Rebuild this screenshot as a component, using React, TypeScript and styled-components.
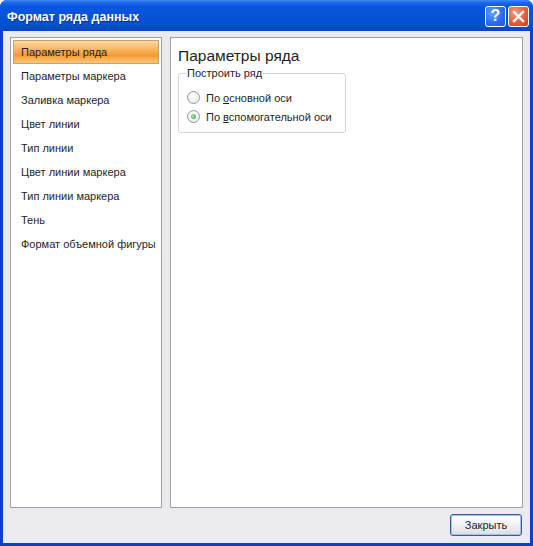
import React from "react";
import styled, { createGlobalStyle } from "styled-components";

const Global = createGlobalStyle`
  html, body { margin: 0; padding: 0; background: #ffffff; }
  body { font-family: "Liberation Sans", Arial, sans-serif; }
`;

const Window = styled.div`
  width: 533px;
  height: 546px;
  box-sizing: border-box;
  display: flex;
  flex-direction: column;
  background: #0842c8;
  border-radius: 7px 7px 0 0;
  overflow: hidden;
`;

const TitleBar = styled.div`
  height: 31px;
  flex: none;
  display: flex;
  align-items: center;
  padding: 0 4px 0 7px;
  box-sizing: border-box;
  background: linear-gradient(
    to bottom,
    #3d8cf5 0%,
    #1f6ae8 8%,
    #0a58e0 20%,
    #0653d8 50%,
    #0550d0 80%,
    #0745c0 100%
  );
`;

const Title = styled.div`
  flex: 1;
  color: #ffffff;
  font-family: "Liberation Sans", Arial, sans-serif;
  font-weight: bold;
  font-size: 12.5px;
  text-shadow: 1px 1px 0 #0a2c80;
  padding-top: 2px;
  white-space: nowrap;
`;

const TitleButtons = styled.div`
  display: flex;
  gap: 2px;
  padding-top: 1px;
`;

const CapButton = styled.div<{ $kind: "help" | "close" }>`
  width: 21px;
  height: 21px;
  box-sizing: border-box;
  border: 1px solid #ffffff;
  border-radius: 3px;
  display: flex;
  align-items: center;
  justify-content: center;
  color: #fff;
  font-family: "Liberation Sans", sans-serif;
  font-weight: bold;
  font-size: 16px;
  background: ${(p) =>
    p.$kind === "help"
      ? "radial-gradient(circle at 35% 30%, #6aa0ff 0%, #2c6cf0 55%, #1a55d8 100%)"
      : "radial-gradient(circle at 35% 30%, #f09a80 0%, #e0603c 55%, #c8401e 100%)"};
`;

const Body = styled.div`
  flex: 1;
  margin: 0 3px 3px 3px;
  background: #ebeaee;
  display: flex;
  flex-direction: column;
  padding: 6px 7px 0 7px;
  box-sizing: border-box;
`;

const Panels = styled.div`
  display: flex;
  gap: 8px;
  height: 471px;
`;

const NavPanel = styled.div`
  width: 152px;
  box-sizing: border-box;
  background: #ffffff;
  border: 1px solid #a0a0a0;
  padding: 2px 2px;
  display: flex;
  flex-direction: column;
`;

const NavItem = styled.div<{ $active?: boolean }>`
  height: 24px;
  flex: none;
  box-sizing: border-box;
  display: flex;
  align-items: center;
  padding-left: 8px;
  font-size: 11px;
  color: #1e1e1e;
  white-space: nowrap;
  ${(p) =>
    p.$active
      ? `
    background: linear-gradient(to bottom, #fbd9a0 0%, #f9b868 35%, #f59a34 65%, #fbc774 100%);
    border: 1px solid #c8a070;
    padding-left: 7px;
  `
      : ""}
`;

const ContentPanel = styled.div`
  flex: 1;
  box-sizing: border-box;
  background: #ffffff;
  border: 1px solid #a0a0a0;
  padding: 9px 7px 8px 7px;
`;

const Heading = styled.div`
  font-size: 15.5px;
  color: #1e1e1e;
  white-space: nowrap;
  margin-bottom: 2px;
`;

const Group = styled.fieldset`
  width: 168px;
  box-sizing: border-box;
  margin: 0;
  border: 1px solid #d5d5d5;
  border-radius: 3px;
  padding: 9px 8px 6px 8px;
`;

const Legend = styled.legend`
  font-size: 11px;
  color: #1e1e1e;
  padding: 0 1px;
  margin-left: -1px;
  white-space: nowrap;
`;

const RadioRow = styled.div`
  display: flex;
  align-items: center;
  gap: 6px;
  height: 19px;
  font-size: 11px;
  color: #1e1e1e;
  white-space: nowrap;
`;

const RadioCircle = styled.div<{ $checked?: boolean }>`
  width: 13px;
  height: 13px;
  flex: none;
  box-sizing: border-box;
  border-radius: 50%;
  border: 1px solid #8a9aa8;
  background: radial-gradient(circle at 50% 40%, #ffffff 0%, #f0f0f0 60%, #dcdcdc 100%);
  display: flex;
  align-items: center;
  justify-content: center;
  &::after {
    content: "";
    display: ${(p) => (p.$checked ? "block" : "none")};
    width: 5px;
    height: 5px;
    border-radius: 50%;
    background: radial-gradient(circle at 40% 40%, #a8e8a0 0%, #3aa030 100%);
  }
`;

const Footer = styled.div`
  flex: 1;
  display: flex;
  justify-content: flex-end;
  align-items: flex-start;
  padding-top: 6px;
  padding-right: 1px;
`;

const Button = styled.div`
  width: 72px;
  height: 22px;
  box-sizing: border-box;
  border: 1px solid #3c5c94;
  border-radius: 3px;
  background: linear-gradient(to bottom, #ffffff 0%, #f2f2f4 50%, #dcdce4 100%);
  box-shadow: inset 0 0 0 1px #9ec0f0;
  display: flex;
  align-items: center;
  justify-content: center;
  font-size: 11px;
  color: #1e1e1e;
`;

const U = styled.span`
  text-decoration: underline;
`;

const navItems = [
  "Параметры ряда",
  "Параметры маркера",
  "Заливка маркера",
  "Цвет линии",
  "Тип линии",
  "Цвет линии маркера",
  "Тип линии маркера",
  "Тень",
  "Формат объемной фигуры",
];

export default function App() {
  return (
    <>
      <Global />
      <Window>
        <TitleBar>
          <Title>Формат ряда данных</Title>
          <TitleButtons>
            <CapButton $kind="help">?</CapButton>
            <CapButton $kind="close">
              <svg width="13" height="13" viewBox="0 0 13 13">
                <path d="M2 2 L11 11 M11 2 L2 11" stroke="#fff" strokeWidth="2.4" strokeLinecap="square" />
              </svg>
            </CapButton>
          </TitleButtons>
        </TitleBar>
        <Body>
          <Panels>
            <NavPanel>
              {navItems.map((t, i) => (
                <NavItem key={t} $active={i === 0}>
                  {t}
                </NavItem>
              ))}
            </NavPanel>
            <ContentPanel>
              <Heading>Параметры ряда</Heading>
              <Group>
                <Legend>Построить ряд</Legend>
                <RadioRow>
                  <RadioCircle />
                  <span>
                    По <U>о</U>сновной оси
                  </span>
                </RadioRow>
                <RadioRow>
                  <RadioCircle $checked />
                  <span>
                    По <U>в</U>спомогательной оси
                  </span>
                </RadioRow>
              </Group>
            </ContentPanel>
          </Panels>
          <Footer>
            <Button>Закрыть</Button>
          </Footer>
        </Body>
      </Window>
    </>
  );
}
